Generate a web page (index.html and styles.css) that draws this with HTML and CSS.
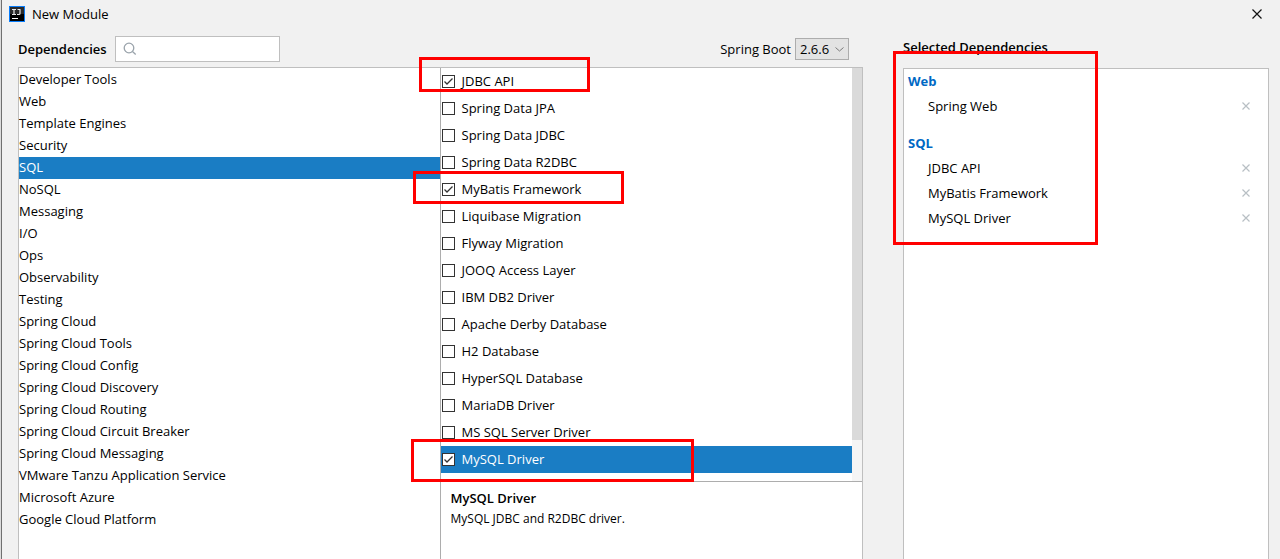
FILE: index.html
```html
<!DOCTYPE html>
<html lang="en">
<head>
<meta charset="utf-8">
<title>New Module</title>
<link rel="stylesheet" href="styles.css">
</head>
<body>
<div class="window">
  <header class="titlebar">
    <svg class="logo" viewBox="0 0 16 16" aria-hidden="true">
      <rect width="16" height="16" fill="#087cfa"/>
      <rect x="1" y="1" width="14" height="14" fill="#000"/>
      <rect x="1" y="1" width="14" height="7" fill="#2a2a2a"/>
      <path d="M3 3.500h4M5 3.500v4.500M3 8.500h4M8.500 3.500h3M11 3.500v4q0 1-1 1h-2" fill="none" stroke="#e8e8e8" stroke-width="1.200"/>
      <path d="M3 12.500h6" stroke="#fff"/>
    </svg>
    <h1 class="title">New Module</h1>
    <button class="close" type="button" aria-label="Close">
      <svg viewBox="0 0 10 10"><path d="M0.500 0.500l9 9M9.500 0.500l-9 9"/></svg>
    </button>
  </header>
  <main class="content">
    <section class="available">
      <div class="toolbar">
        <label class="heading" for="search">Dependencies</label>
        <div class="search">
          <svg viewBox="0 0 14 14" aria-hidden="true"><circle cx="6" cy="6" r="4.800"/><path d="M9.500 9.500l3.200 3"/></svg>
          <input id="search" type="text">
        </div>
        <label class="version-label" for="version">Spring Boot</label>
        <div class="version">
          <select id="version"><option>2.6.6</option></select>
          <svg viewBox="0 0 9 5" aria-hidden="true"><path d="M0.500 0.500l4 3.500l4-3.500"/></svg>
        </div>
      </div>
      <div class="panes">
        <ul class="categories">
          <li>Developer Tools</li>
          <li>Web</li>
          <li>Template Engines</li>
          <li>Security</li>
          <li class="active">SQL</li>
          <li>NoSQL</li>
          <li>Messaging</li>
          <li>I/O</li>
          <li>Ops</li>
          <li>Observability</li>
          <li>Testing</li>
          <li>Spring Cloud</li>
          <li>Spring Cloud Tools</li>
          <li>Spring Cloud Config</li>
          <li>Spring Cloud Discovery</li>
          <li>Spring Cloud Routing</li>
          <li>Spring Cloud Circuit Breaker</li>
          <li>Spring Cloud Messaging</li>
          <li>VMware Tanzu Application Service</li>
          <li>Microsoft Azure</li>
          <li>Google Cloud Platform</li>
        </ul>
        <div class="options">
          <div class="scroller">
            <ul class="checks">
              <li><label><input type="checkbox" checked>JDBC API</label><span class="mark mark-jdbc"></span></li>
              <li><label><input type="checkbox">Spring Data JPA</label></li>
              <li><label><input type="checkbox">Spring Data JDBC</label></li>
              <li><label><input type="checkbox">Spring Data R2DBC</label></li>
              <li><label><input type="checkbox" checked>MyBatis Framework</label><span class="mark mark-mybatis"></span></li>
              <li><label><input type="checkbox">Liquibase Migration</label></li>
              <li><label><input type="checkbox">Flyway Migration</label></li>
              <li><label><input type="checkbox">JOOQ Access Layer</label></li>
              <li><label><input type="checkbox">IBM DB2 Driver</label></li>
              <li><label><input type="checkbox">Apache Derby Database</label></li>
              <li><label><input type="checkbox">H2 Database</label></li>
              <li><label><input type="checkbox">HyperSQL Database</label></li>
              <li><label><input type="checkbox">MariaDB Driver</label></li>
              <li><label><input type="checkbox">MS SQL Server Driver</label></li>
              <li class="active"><label><input type="checkbox" checked>MySQL Driver</label><span class="mark mark-mysql"></span></li>
            </ul>
            <div class="scrollbar"><div class="thumb"></div></div>
          </div>
          <div class="details">
            <h2>MySQL Driver</h2>
            <p>MySQL JDBC and R2DBC driver.</p>
          </div>
        </div>
      </div>
    </section>
    <section class="selected">
      <h2 class="heading selected-heading">Selected Dependencies</h2>
      <div class="selected-list">
        <h3>Web</h3>
        <ul>
          <li>Spring Web<button type="button" aria-label="Remove Spring Web"><svg viewBox="0 0 8 8"><path d="M0.500 0.500l7 7M7.500 0.500l-7 7"/></svg></button></li>
        </ul>
        <h3>SQL</h3>
        <ul>
          <li>JDBC API<button type="button" aria-label="Remove JDBC API"><svg viewBox="0 0 8 8"><path d="M0.500 0.500l7 7M7.500 0.500l-7 7"/></svg></button></li>
          <li>MyBatis Framework<button type="button" aria-label="Remove MyBatis Framework"><svg viewBox="0 0 8 8"><path d="M0.500 0.500l7 7M7.500 0.500l-7 7"/></svg></button></li>
          <li>MySQL Driver<button type="button" aria-label="Remove MySQL Driver"><svg viewBox="0 0 8 8"><path d="M0.500 0.500l7 7M7.500 0.500l-7 7"/></svg></button></li>
        </ul>
        <span class="mark mark-selected"></span>
      </div>
    </section>
  </main>
</div>
</body>
</html>
```
FILE: styles.css
```css
* { box-sizing: border-box; }
body {
  margin: 0;
  background: #f1f1f1;
  color: #000;
  font: 13px/22px "Open Sans", "Noto Sans", sans-serif;
}
h1, h2, h3, p, ul { margin: 0; padding: 0; font-size: inherit; list-style: none; }
button { padding: 0; border: 0; background: none; display: flex; }
svg { display: block; fill: none; }
.window {
  min-height: 100vh;
  display: flex;
  flex-direction: column;
  border-left: 1px solid #dcdcdc;
  box-shadow: inset 1px 0 #707070;
}
.titlebar {
  height: 27px;
  display: flex;
  align-items: center;
  padding: 0 18px 0 8px;
}
.logo { width: 16px; height: 16px; }
.title { margin-left: 7px; font-weight: 400; }
.close { margin-left: auto; }
.close svg { width: 10px; height: 10px; stroke: #111; stroke-width: 1.2; }
.content {
  flex: 1;
  display: flex;
  gap: 40px;
  padding: 0 11px 0 17px;
}
.available { flex: 845; min-width: 0; display: flex; flex-direction: column; }
.selected { flex: 366; min-width: 0; display: flex; flex-direction: column; }
.heading, h2 { font-weight: 600; }
.toolbar { height: 40px; display: flex; align-items: center; padding: 4px 14px 0 0; }
.toolbar .heading { width: 97px; }
.search {
  width: 165px;
  height: 26px;
  display: flex;
  align-items: center;
  padding: 0 7px;
  border: 1px solid #bfbfbf;
  background: #fff;
}
.search svg { width: 14px; height: 14px; stroke: #9aa3ab; stroke-width: 1.3; flex: none; }
.search input { flex: 1; min-width: 0; border: 0; outline: 0; background: none; font: inherit; }
.version-label { margin-left: auto; }
.version { margin-left: 4px; display: grid; align-items: center; }
.version select, .version svg { grid-area: 1 / 1; }
.version select {
  appearance: none;
  width: 54px;
  height: 22px;
  padding: 0 4px;
  border: 1px solid #adadad;
  border-radius: 0;
  background: #e3e3e3;
  color: #000;
  font: inherit;
  line-height: 20px;
}
.version svg { width: 9px; height: 5px; justify-self: end; margin-right: 5px; stroke: #7a7a7a; pointer-events: none; }
.panes {
  flex: 1;
  display: flex;
  border: 1px solid #bfbfbf;
  border-bottom: 0;
  background: #fff;
}
.categories { flex: 421; padding-top: 1px; }
.categories li { height: 22px; line-height: 20px; }
.active { background: #1a7dc4; color: #fff; }
.options { flex: 422; display: flex; flex-direction: column; border-left: 1px solid #adadad; }
.scroller { display: flex; height: 413px; }
.checks { flex: 1; }
.checks li { position: relative; height: 27px; }
.checks label { display: flex; align-items: center; height: 27px; padding: 0 0 1px 1px; line-height: 20px; }
.checks input {
  appearance: none;
  width: 13px;
  height: 13px;
  margin: 1px 7px 0 0;
  border: 1px solid #333;
  background: #fff;
}
.checks input:checked {
  background: #fff url("data:image/svg+xml,%3Csvg xmlns='http://www.w3.org/2000/svg' viewBox='0 0 11 11'%3E%3Cpath d='M1.500 5.500l2.500 2.500l5.500-5.500' fill='none' stroke='%23333' stroke-width='1.300'/%3E%3C/svg%3E");
}
.scrollbar { width: 10px; background: #f5f5f5; }
.thumb { height: 90%; background: #dadada; }
.details { flex: 1; padding: 5px 10px; border-top: 1px solid #adadad; }
.details p { font-size: 12px; line-height: 20px; }
.selected-heading { height: 41px; padding-top: 9px; }
.selected-list {
  position: relative;
  flex: 1;
  border: 1px solid #bfbfbf;
  border-bottom: 0;
  background: #fff;
  line-height: 25px;
}
.selected-list h3 { padding-left: 4px; color: #0068c4; }
.selected-list ul { margin-bottom: 12px; }
.selected-list li { display: flex; align-items: center; justify-content: space-between; padding: 0 18px 0 24px; }
.selected-list button { margin-bottom: 1px; }
.selected-list button svg { width: 8px; height: 8px; stroke: #b8bfc4; stroke-width: 1.2; }
.mark { position: absolute; z-index: 1; border: 3px solid #f00; pointer-events: none; }
.mark-jdbc { left: -22px; top: -11px; width: 171px; height: 35px; }
.mark-mybatis { left: -28px; top: -5px; width: 211px; height: 33px; }
.mark-mysql { left: -30px; top: -7px; width: 283px; height: 43px; }
.mark-selected { left: -11px; top: -18px; width: 205px; height: 194px; }
```
